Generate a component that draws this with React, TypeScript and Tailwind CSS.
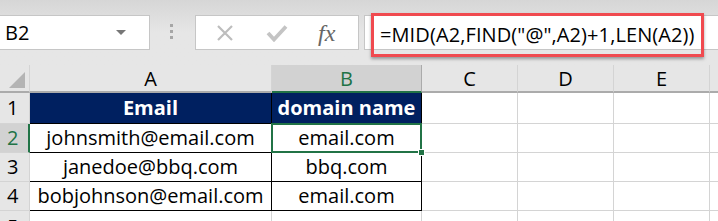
import React from 'react';

const font = { fontFamily: '"Open Sans", "Liberation Sans", sans-serif' };

const rows = [
  { email: 'johnsmith@email.com', domain: 'email.com' },
  { email: 'janedoe@bbq.com', domain: 'bbq.com' },
  { email: 'bobjohnson@email.com', domain: 'email.com' },
];

const FormulaBar: React.FC = () => (
  <div className="relative h-[65px] bg-gradient-to-b from-[#d6d6d6] via-[#e6e6e6] to-[#e6e6e6]">
    {/* name box */}
    <div className="absolute left-0 top-[15px] flex h-[35px] w-[150px] items-center justify-between border border-l-0 border-[#c6c6c6] bg-white pl-[5px] pr-[30px]">
      <span className="text-[20px] text-black">B2</span>
      <svg width="10" height="6" viewBox="0 0 10 6" className="-mr-[7px]">
        <path d="M0 0 L10 0 L5 5 Z" fill="#777" />
      </svg>
    </div>
    {/* grip dots */}
    <div className="absolute left-[170px] top-[24px] flex flex-col gap-[3px]">
      <span className="h-[3px] w-[3px] bg-[#a6a6a6]" />
      <span className="h-[3px] w-[3px] bg-[#a6a6a6]" />
      <span className="h-[3px] w-[3px] bg-[#a6a6a6]" />
    </div>
    {/* icon box */}
    <div className="absolute left-[195px] top-[15px] flex h-[35px] w-[164px] items-center border border-[#c6c6c6] bg-white">
      <svg width="18" height="18" viewBox="0 0 18 18" className="ml-[20px]">
        <path d="M2 2 L16 16 M16 2 L2 16" stroke="#bdbdbd" strokeWidth="2.2" />
      </svg>
      <svg width="22" height="18" viewBox="0 0 22 18" className="ml-[32px]">
        <path d="M2 9 L8 15.5 L20 2.5" stroke="#c4c4c4" strokeWidth="3.8" fill="none" />
      </svg>
      <span className="ml-[30px] text-[24px] text-[#666]" style={{ fontFamily: '"Liberation Serif", serif' }}>
        <i>fx</i>
      </span>
    </div>
    {/* formula input */}
    <div className="absolute left-[364px] right-0 top-[15px] h-[35px] border border-r-0 border-[#c6c6c6] bg-white" />
    {/* highlight */}
    <div className="absolute left-[371px] top-[13px] flex h-[44px] w-[333px] items-center border-[3px] border-[#f04a4f] pl-[6px] shadow-[0_2px_3px_rgba(0,0,0,0.35)]">
      <span className="whitespace-nowrap text-[20px] tracking-[0.1px] text-black" style={font}>
        =MID(A2,FIND("@",A2)+1,LEN(A2))
      </span>
    </div>
  </div>
);

const App: React.FC = () => {
  const cols = ['C', 'D', 'E'];
  return (
    <div className="h-[221px] w-[718px] overflow-hidden bg-white" style={font}>
      <FormulaBar />
      <div className="grid grid-cols-[30px_242px_150px_96px_96px_96px_1fr] grid-rows-[28px_31px_29px_29px_29px_29px]">
        {/* column headers */}
        <div className="relative border-b-2 border-r border-b-[#ababab] border-r-[#d4d4d4] bg-[#e6e6e6]">
          <svg width="16" height="16" viewBox="0 0 16 16" className="absolute bottom-[3px] right-[4px]">
            <path d="M16 0 L16 16 L0 16 Z" fill="#b4b4b4" />
          </svg>
        </div>
        <div className="flex items-center justify-center pt-[2px] border-b-2 border-r border-b-[#ababab] border-r-[#d4d4d4] bg-[#e6e6e6] text-[20px] text-black">
          A
        </div>
        <div className="flex items-center justify-center pt-[2px] border-b-2 border-r border-b-[#217346] border-r-[#ababab] bg-[#d2d2d2] text-[20px] text-[#217346]">
          B
        </div>
        {cols.map((c) => (
          <div
            key={c}
            className="flex items-center justify-center pt-[2px] border-b-2 border-r border-b-[#ababab] border-r-[#d4d4d4] bg-[#e6e6e6] text-[20px] text-black"
          >
            {c}
          </div>
        ))}
        <div className="border-b-2 border-b-[#ababab] bg-[#e6e6e6]" />

        {/* row 1 */}
        <div className="flex items-center pl-[7px] border-b border-r border-[#d4d4d4] bg-[#e6e6e6] text-[20px] text-black">1</div>
        <div className="flex items-center justify-center border-b border-r border-black bg-[#002060] text-[20px] font-bold text-white">
          Email
        </div>
        <div className="flex items-center justify-center border-b border-r border-black bg-[#002060] text-[20px] font-bold text-white">
          domain name
        </div>
        {cols.map((c) => (
          <div key={c} className="border-b border-r border-[#d4d4d4]" />
        ))}
        <div className="border-b border-[#d4d4d4]" />

        {/* data rows */}
        {rows.map((r, i) => {
          const sel = i === 0;
          return (
            <React.Fragment key={r.email}>
              <div
                className={
                  sel
                    ? 'flex items-center pl-[7px] border-b border-r-2 border-b-[#d4d4d4] border-r-[#217346] bg-[#d2d2d2] text-[20px] text-[#217346]'
                    : 'flex items-center pl-[7px] border-b border-r border-[#d4d4d4] bg-[#e6e6e6] text-[20px] text-black'
                }
              >
                {i + 2}
              </div>
              <div className="flex items-center justify-center border-b border-r border-black text-[20px] text-black whitespace-nowrap">
                {r.email}
              </div>
              <div
                className={
                  sel
                    ? 'relative -ml-px -mt-px flex items-center justify-center border-2 border-[#217346] text-[20px] text-black'
                    : 'flex items-center justify-center border-b border-r border-black text-[20px] text-black'
                }
              >
                {r.domain}
                {sel && <span className="absolute -bottom-[5px] -right-[5px] h-[7px] w-[7px] border border-white bg-[#217346]" />}
              </div>
              {cols.map((c) => (
                <div key={c} className="border-b border-r border-[#d4d4d4]" />
              ))}
              <div className="border-b border-[#d4d4d4]" />
            </React.Fragment>
          );
        })}

        {/* row 5 */}
        <div className="flex items-start pt-[6px] pl-[7px] border-r border-[#d4d4d4] bg-[#e6e6e6] text-[20px] leading-none text-black">5</div>
        <div className="border-r border-[#d4d4d4]" />
        <div className="border-r border-[#d4d4d4]" />
        {cols.map((c) => (
          <div key={c} className="border-r border-[#d4d4d4]" />
        ))}
        <div />
      </div>
    </div>
  );
};

export default App;
